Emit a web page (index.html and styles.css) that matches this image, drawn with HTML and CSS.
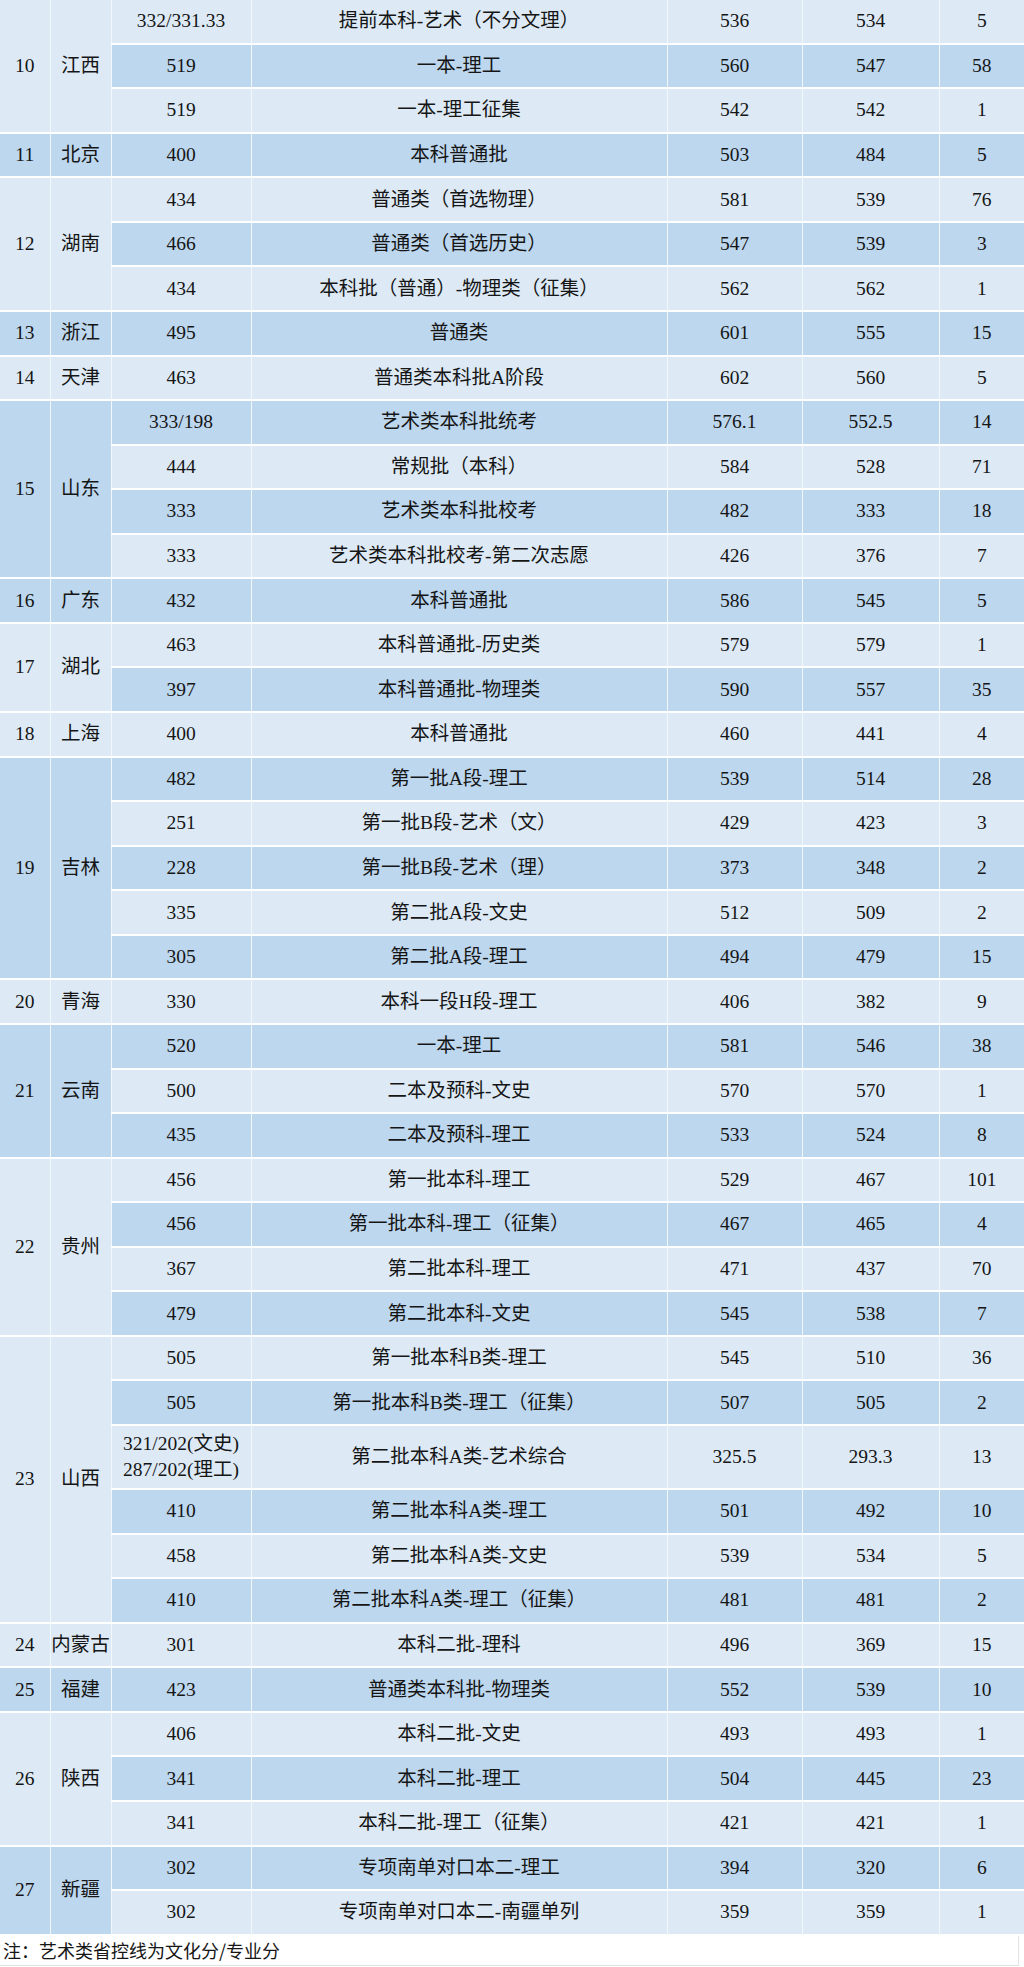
FILE: index.html
```html
<!DOCTYPE html>
<html lang="zh-CN">
<head>
<meta charset="utf-8">
<title>分数线</title>
<link rel="stylesheet" href="styles.css">
</head>
<body>
<table class="score-table">
<colgroup>
<col class="c-idx"><col class="c-prov"><col class="c-line"><col class="c-batch"><col class="c-max"><col class="c-min"><col class="c-num">
</colgroup>
<tbody>
<tr class="lt"><td rowspan="3">10</td><td rowspan="3">江西</td><td>332/331.33</td><td>提前本科-艺术（不分文理）</td><td>536</td><td>534</td><td>5</td></tr>
<tr class="dk"><td>519</td><td>一本-理工</td><td>560</td><td>547</td><td>58</td></tr>
<tr class="lt"><td>519</td><td>一本-理工征集</td><td>542</td><td>542</td><td>1</td></tr>
<tr class="dk"><td>11</td><td>北京</td><td>400</td><td>本科普通批</td><td>503</td><td>484</td><td>5</td></tr>
<tr class="lt"><td rowspan="3">12</td><td rowspan="3">湖南</td><td>434</td><td>普通类（首选物理）</td><td>581</td><td>539</td><td>76</td></tr>
<tr class="dk"><td>466</td><td>普通类（首选历史）</td><td>547</td><td>539</td><td>3</td></tr>
<tr class="lt"><td>434</td><td>本科批（普通）-物理类（征集）</td><td>562</td><td>562</td><td>1</td></tr>
<tr class="dk"><td>13</td><td>浙江</td><td>495</td><td>普通类</td><td>601</td><td>555</td><td>15</td></tr>
<tr class="lt"><td>14</td><td>天津</td><td>463</td><td>普通类本科批A阶段</td><td>602</td><td>560</td><td>5</td></tr>
<tr class="dk"><td rowspan="4">15</td><td rowspan="4">山东</td><td>333/198</td><td>艺术类本科批统考</td><td>576.1</td><td>552.5</td><td>14</td></tr>
<tr class="lt"><td>444</td><td>常规批（本科）</td><td>584</td><td>528</td><td>71</td></tr>
<tr class="dk"><td>333</td><td>艺术类本科批校考</td><td>482</td><td>333</td><td>18</td></tr>
<tr class="lt"><td>333</td><td>艺术类本科批校考-第二次志愿</td><td>426</td><td>376</td><td>7</td></tr>
<tr class="dk"><td>16</td><td>广东</td><td>432</td><td>本科普通批</td><td>586</td><td>545</td><td>5</td></tr>
<tr class="lt"><td rowspan="2">17</td><td rowspan="2">湖北</td><td>463</td><td>本科普通批-历史类</td><td>579</td><td>579</td><td>1</td></tr>
<tr class="dk"><td>397</td><td>本科普通批-物理类</td><td>590</td><td>557</td><td>35</td></tr>
<tr class="lt"><td>18</td><td>上海</td><td>400</td><td>本科普通批</td><td>460</td><td>441</td><td>4</td></tr>
<tr class="dk"><td rowspan="5">19</td><td rowspan="5">吉林</td><td>482</td><td>第一批A段-理工</td><td>539</td><td>514</td><td>28</td></tr>
<tr class="lt"><td>251</td><td>第一批B段-艺术（文）</td><td>429</td><td>423</td><td>3</td></tr>
<tr class="dk"><td>228</td><td>第一批B段-艺术（理）</td><td>373</td><td>348</td><td>2</td></tr>
<tr class="lt"><td>335</td><td>第二批A段-文史</td><td>512</td><td>509</td><td>2</td></tr>
<tr class="dk"><td>305</td><td>第二批A段-理工</td><td>494</td><td>479</td><td>15</td></tr>
<tr class="lt"><td>20</td><td>青海</td><td>330</td><td>本科一段H段-理工</td><td>406</td><td>382</td><td>9</td></tr>
<tr class="dk"><td rowspan="3">21</td><td rowspan="3">云南</td><td>520</td><td>一本-理工</td><td>581</td><td>546</td><td>38</td></tr>
<tr class="lt"><td>500</td><td>二本及预科-文史</td><td>570</td><td>570</td><td>1</td></tr>
<tr class="dk"><td>435</td><td>二本及预科-理工</td><td>533</td><td>524</td><td>8</td></tr>
<tr class="lt"><td rowspan="4">22</td><td rowspan="4">贵州</td><td>456</td><td>第一批本科-理工</td><td>529</td><td>467</td><td>101</td></tr>
<tr class="dk"><td>456</td><td>第一批本科-理工（征集）</td><td>467</td><td>465</td><td>4</td></tr>
<tr class="lt"><td>367</td><td>第二批本科-理工</td><td>471</td><td>437</td><td>70</td></tr>
<tr class="dk"><td>479</td><td>第二批本科-文史</td><td>545</td><td>538</td><td>7</td></tr>
<tr class="lt"><td rowspan="6">23</td><td rowspan="6">山西</td><td>505</td><td>第一批本科B类-理工</td><td>545</td><td>510</td><td>36</td></tr>
<tr class="dk"><td>505</td><td>第一批本科B类-理工（征集）</td><td>507</td><td>505</td><td>2</td></tr>
<tr class="lt tall"><td>321/202(文史)<br>287/202(理工)</td><td>第二批本科A类-艺术综合</td><td>325.5</td><td>293.3</td><td>13</td></tr>
<tr class="dk"><td>410</td><td>第二批本科A类-理工</td><td>501</td><td>492</td><td>10</td></tr>
<tr class="lt"><td>458</td><td>第二批本科A类-文史</td><td>539</td><td>534</td><td>5</td></tr>
<tr class="dk"><td>410</td><td>第二批本科A类-理工（征集）</td><td>481</td><td>481</td><td>2</td></tr>
<tr class="lt"><td>24</td><td>内蒙古</td><td>301</td><td>本科二批-理科</td><td>496</td><td>369</td><td>15</td></tr>
<tr class="dk"><td>25</td><td>福建</td><td>423</td><td>普通类本科批-物理类</td><td>552</td><td>539</td><td>10</td></tr>
<tr class="lt"><td rowspan="3">26</td><td rowspan="3">陕西</td><td>406</td><td>本科二批-文史</td><td>493</td><td>493</td><td>1</td></tr>
<tr class="dk"><td>341</td><td>本科二批-理工</td><td>504</td><td>445</td><td>23</td></tr>
<tr class="lt"><td>341</td><td>本科二批-理工（征集）</td><td>421</td><td>421</td><td>1</td></tr>
<tr class="dk"><td rowspan="2">27</td><td rowspan="2">新疆</td><td>302</td><td>专项南单对口本二-理工</td><td>394</td><td>320</td><td>6</td></tr>
<tr class="lt"><td>302</td><td>专项南单对口本二-南疆单列</td><td>359</td><td>359</td><td>1</td></tr>
</tbody>
</table>
<div class="note">注：艺术类省控线为文化分/专业分</div>
</body>
</html>
```
FILE: styles.css
```css
html, body {
  margin: 0;
  padding: 0;
  background: #ffffff;
}
body {
  width: 1024px;
  font-family: "Liberation Serif", "Noto Sans CJK SC", serif;
  font-size: 19.5px;
  color: #151515;
}
.score-table {
  width: 1024px;
  table-layout: fixed;
  border-collapse: collapse;
  border-spacing: 0;
}
.c-idx { width: 50px; }
.c-prov { width: 61px; }
.c-line { width: 140px; }
.c-batch { width: 416px; }
.c-max { width: 135px; }
.c-min { width: 137px; }
.c-num { width: 85px; }
.score-table td {
  height: 42.57px;
  padding: 0;
  text-align: center;
  vertical-align: middle;
  border-top: 2px solid #ffffff;
  border-bottom: 2px solid #ffffff;
  border-left: 1px solid #f2f7fc;
  border-right: 1px solid #f2f7fc;
  line-height: 22px;
  white-space: nowrap;
}
.score-table tr:first-child td { border-top: none; }
.score-table tr td:first-child { border-left: none; }
.score-table tr td:last-child { border-right: none; }
.score-table tr.tall td { height: 62px; line-height: 26px; }
.lt td { background: #ddeaf6; }
.dk td { background: #bdd7ee; }
.note {
  height: 29px;
  line-height: 29px;
  padding-left: 3px;
  width: 1015px;
  border-right: 1px solid #e2e2e2;
  border-bottom: 1px solid #e2e2e2;
  font-family: "Noto Sans CJK SC", serif;
  font-size: 18px;
}
```
